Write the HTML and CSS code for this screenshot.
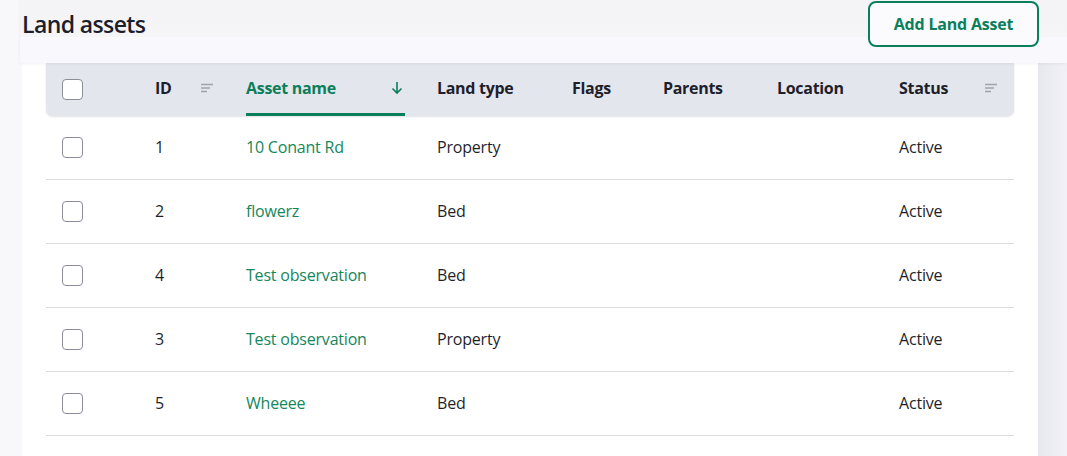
FILE: index.html
```html
<!DOCTYPE html>
<html lang="en">
<head>
<meta charset="utf-8">
<title>Land assets</title>
<link rel="stylesheet" href="styles.css">
</head>
<body>
<div class="page">
  <header class="topbar">
    <h1 class="title">Land assets</h1>
    <button class="add-btn">Add Land Asset</button>
  </header>
  <div class="content">
    <div class="gutter"></div>
    <main class="card">
      <div class="table">
        <div class="thead">
          <div class="th"><span class="checkbox"></span></div>
          <div class="th"><span>ID</span><svg class="ico" viewBox="0 0 12 10"><path d="M0 1.5h12M0 5h9M0 8.5h6" stroke="#9ea3ad" stroke-width="1.6"/></svg></div>
          <div class="th sorted"><span>Asset name</span><svg class="arrow" viewBox="0 0 12 14"><path d="M6 1v11M1.5 7.5L6 12l4.5-4.5" fill="none" stroke="#0b7f5a" stroke-width="1.6"/></svg></div>
          <div class="th"><span>Land type</span></div>
          <div class="th"><span>Flags</span></div>
          <div class="th"><span>Parents</span></div>
          <div class="th"><span>Location</span></div>
          <div class="th"><span>Status</span><svg class="ico" viewBox="0 0 12 10"><path d="M0 1.5h12M0 5h9M0 8.5h6" stroke="#9ea3ad" stroke-width="1.6"/></svg></div>
        </div>
        <div class="tr">
          <div class="td"><span class="checkbox"></span></div>
          <div class="td">1</div>
          <div class="td link">10 Conant Rd</div>
          <div class="td">Property</div>
          <div class="td"></div><div class="td"></div><div class="td"></div>
          <div class="td">Active</div>
        </div>
        <div class="tr">
          <div class="td"><span class="checkbox"></span></div>
          <div class="td">2</div>
          <div class="td link">flowerz</div>
          <div class="td">Bed</div>
          <div class="td"></div><div class="td"></div><div class="td"></div>
          <div class="td">Active</div>
        </div>
        <div class="tr">
          <div class="td"><span class="checkbox"></span></div>
          <div class="td">4</div>
          <div class="td link">Test observation</div>
          <div class="td">Bed</div>
          <div class="td"></div><div class="td"></div><div class="td"></div>
          <div class="td">Active</div>
        </div>
        <div class="tr">
          <div class="td"><span class="checkbox"></span></div>
          <div class="td">3</div>
          <div class="td link">Test observation</div>
          <div class="td">Property</div>
          <div class="td"></div><div class="td"></div><div class="td"></div>
          <div class="td">Active</div>
        </div>
        <div class="tr">
          <div class="td"><span class="checkbox"></span></div>
          <div class="td">5</div>
          <div class="td link">Wheeee</div>
          <div class="td">Bed</div>
          <div class="td"></div><div class="td"></div><div class="td"></div>
          <div class="td">Active</div>
        </div>
      </div>
    </main>
    <div class="rightshade"></div>
  </div>
</div>
</body>
</html>
```
FILE: styles.css
```css
* { box-sizing: border-box; }
html, body { margin: 0; padding: 0; }
body {
  background: #f8f8fb;
  font-family: "Open Sans", "Noto Sans", sans-serif;
  color: #1f1f2c;
  width: 1067px;
  height: 456px;
  overflow: hidden;
}
.page { display: flex; flex-direction: column; height: 456px; }
.topbar {
  position: relative;
  z-index: 2;
  height: 63px;
  margin-left: 20px;
  padding: 1px 28px 0 2px;
  display: flex;
  justify-content: space-between;
  align-items: flex-start;
  background: linear-gradient(to bottom, #f4f4f7 0, #f5f5f8 37px, #f8f8fd 37px, #f8f8fd 63px);
  box-shadow: 0 1px 3px rgba(30, 30, 60, 0.06);
}
.title {
  margin: 0;
  margin-top: 8px;
  font-size: 23px;
  font-weight: 600;
  letter-spacing: -0.6px;
  color: #1e1e2b;
  line-height: 30px;
}
.add-btn {
  width: 171px;
  height: 46px;
  border: 2px solid #0b7f5a;
  border-radius: 8px;
  background: #fbfbfe;
  color: #0b7f5a;
  font-family: inherit;
  font-size: 16px;
  font-weight: 700;
  letter-spacing: -0.2px;
  padding: 0;
  cursor: pointer;
}
.content { flex: 1; display: flex; }
.gutter { width: 22px; background: #f8f8fb; }
.card {
  width: 1016px;
  background: #ffffff;
  padding: 0 24px;
}
.rightshade {
  flex: 1;
  background: linear-gradient(to right, #e7e8ee, #f1f1f6);
}
.table { font-size: 16px; }
.thead, .tr {
  display: grid;
  grid-template-columns: 93px 91px 191px 135px 91px 114px 122px 131px;
}
.thead {
  height: 53px;
  background: #e4e6ed;
  border-radius: 0 0 7px 7px;
  box-shadow: 0 1px 2px rgba(0, 0, 0, 0.12);
  font-weight: 700;
  letter-spacing: -0.3px;
  color: #1f1f2c;
}
.th {
  position: relative;
  display: flex;
  align-items: center;
  justify-content: space-between;
  padding: 0 17px 3px 16px;
}
.th:first-child { padding-bottom: 0; }
.th.sorted { color: #0b7f5a; }
.th.sorted::after {
  content: "";
  position: absolute;
  left: 16px;
  right: 16px;
  bottom: 0;
  height: 3px;
  background: #0b7f5a;
}
.ico { width: 12px; height: 10px; }
.arrow { width: 12px; height: 14px; margin-right: 1px; }
.tr {
  height: 64px;
  border-bottom: 1px solid #dcdde1;
}
.td {
  display: flex;
  align-items: center;
  padding: 0 16px 1px;
  color: #1f1f2c;
  letter-spacing: -0.2px;
}
.td:first-child { padding-bottom: 0; }
.td.link { color: #14875c; }
.checkbox {
  display: inline-block;
  width: 21px;
  height: 21px;
  border: 1.5px solid #8b8e98;
  border-radius: 4px;
  background: #ffffff;
}
```
